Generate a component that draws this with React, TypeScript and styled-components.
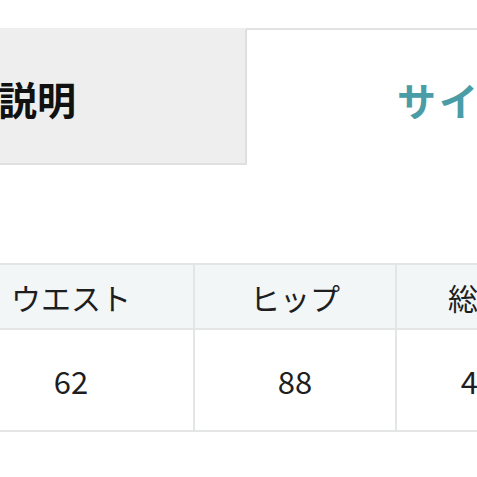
import React from "react";
import styled, { createGlobalStyle } from "styled-components";

const Global = createGlobalStyle`
  html, body { margin: 0; padding: 0; background: #ffffff; }
  body { font-family: "Noto Sans CJK JP", "Noto Sans", sans-serif; color: #1a1a1a; }
`;

const Page = styled.div`
  width: 477px;
  height: 477px;
  overflow: hidden;
  background: #fff;
`;

const Tabs = styled.div`
  display: flex;
  margin: 28px 0 0 -249px;
  width: 1000px;
`;

const Tab = styled.div<{ $active?: boolean }>`
  box-sizing: border-box;
  width: 496px;
  height: 137px;
  display: flex;
  align-items: center;
  justify-content: ${(p) => (p.$active ? "flex-start" : "center")};
  padding: 3px 0 0 ${(p) => (p.$active ? "150px" : "0")};
  font-size: 39px;
  font-weight: 700;
  letter-spacing: ${(p) => (p.$active ? "3px" : "0")};
  white-space: nowrap;
  background: ${(p) => (p.$active ? "#ffffff" : "#eeeeee")};
  color: ${(p) => (p.$active ? "#4a9da7" : "#111111")};
  border-top: 2px solid ${(p) => (p.$active ? "#e2e2e2" : "#eeeeee")};
  border-right: ${(p) => (p.$active ? "none" : "2px solid #dedede")};
  border-bottom: ${(p) => (p.$active ? "none" : "2px solid #e0e0e0")};
`;

const SizeTable = styled.table`
  border-collapse: collapse;
  margin: 98px 0 0 -53px;
  table-layout: fixed;
  width: 612px;
`;

const Col = styled.col<{ $w: number }>`
  width: ${(p) => p.$w}px;
`;

const HeadCell = styled.th`
  height: 63px;
  padding: 0;
  background: #f2f6f7;
  border: 2px solid #e4e6e6;
  font-size: 30px;
  font-weight: 400;
  color: #1e1e1e;
  text-align: center;
  white-space: nowrap;
  overflow: hidden;
`;

const BodyCell = styled.td`
  height: 100px;
  padding: 0;
  background: #ffffff;
  border: 2px solid #e4e6e6;
  font-size: 31px;
  color: #1e1e1e;
  text-align: center;
  white-space: nowrap;
  overflow: hidden;
`;

const columns = [
  { label: "ウエスト", value: "62", w: 246 },
  { label: "ヒップ", value: "88", w: 202 },
  { label: "総丈", value: "40", w: 164 },
];

export default function App() {
  return (
    <Page>
      <Global />
      <Tabs>
        <Tab>商品説明</Tab>
        <Tab $active>サイズ詳細</Tab>
      </Tabs>
      <SizeTable>
        <colgroup>
          {columns.map((c) => (
            <Col key={c.label} $w={c.w} />
          ))}
        </colgroup>
        <thead>
          <tr>
            {columns.map((c) => (
              <HeadCell key={c.label}>{c.label}</HeadCell>
            ))}
          </tr>
        </thead>
        <tbody>
          <tr>
            {columns.map((c) => (
              <BodyCell key={c.label}>{c.value}</BodyCell>
            ))}
          </tr>
        </tbody>
      </SizeTable>
    </Page>
  );
}
